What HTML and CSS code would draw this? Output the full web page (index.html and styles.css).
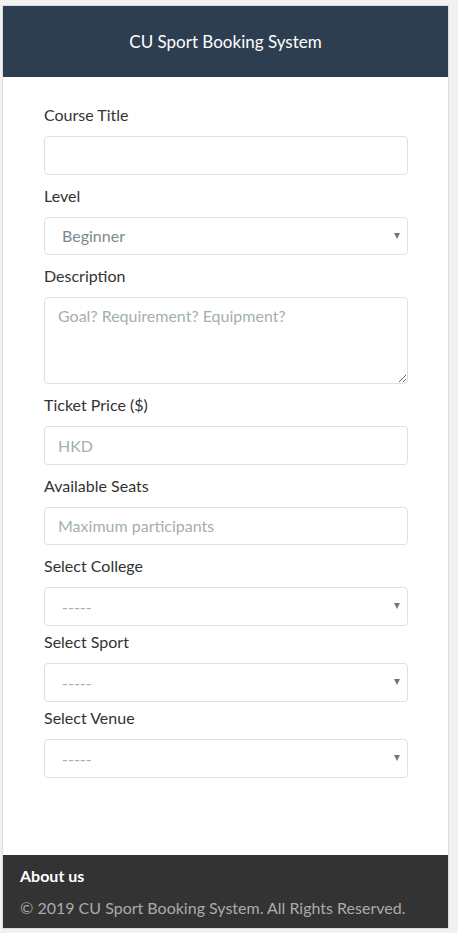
FILE: index.html
```html
<!DOCTYPE html>
<html lang="en">
<head>
<meta charset="utf-8">
<title>CU Sport Booking System</title>
<link rel="stylesheet" href="styles.css">
</head>
<body>
<div class="frame">
  <header class="topbar">
    <h1 class="brand">CU Sport Booking System</h1>
  </header>
  <main class="content">
    <form class="course-form">
      <div class="group">
        <label class="label">Course Title</label>
        <input class="field" type="text">
      </div>
      <div class="group">
        <label class="label">Level</label>
        <div class="select-wrap">
          <select class="field select"><option>Beginner</option></select>
        </div>
      </div>
      <div class="group">
        <label class="label">Description</label>
        <textarea class="field area" placeholder="Goal? Requirement? Equipment?"></textarea>
      </div>
      <div class="group">
        <label class="label">Ticket Price ($)</label>
        <input class="field" type="text" placeholder="HKD">
      </div>
      <div class="group">
        <label class="label">Available Seats</label>
        <input class="field" type="text" placeholder="Maximum participants">
      </div>
      <div class="group tight">
        <label class="label">Select College</label>
        <div class="select-wrap">
          <select class="field select dim"><option>-----</option></select>
        </div>
      </div>
      <div class="group tight">
        <label class="label">Select Sport</label>
        <div class="select-wrap">
          <select class="field select dim"><option>-----</option></select>
        </div>
      </div>
      <div class="group tight">
        <label class="label">Select Venue</label>
        <div class="select-wrap">
          <select class="field select dim"><option>-----</option></select>
        </div>
      </div>
    </form>
  </main>
  <footer class="footer">
    <div class="footer-title">About us</div>
    <div class="footer-copy">© 2019 CU Sport Booking System. All Rights Reserved.</div>
  </footer>
</div>
</body>
</html>
```
FILE: styles.css
```css
html, body {
  margin: 0;
  padding: 0;
}
body {
  background: #f1f1f1;
  font-family: Lato, "Open Sans", sans-serif;
}
.frame {
  margin: 5px 0 0 2px;
  width: 445px;
  border: 1px solid #dcdcdc;
  background: #fff;
  display: flex;
  flex-direction: column;
}
.topbar {
  background: #2c3e50;
  height: 71px;
  display: flex;
  align-items: center;
  justify-content: center;
}
.brand {
  margin: 0;
  color: #fff;
  font-size: 17px;
  font-weight: 400;
  line-height: 1;
}
.content {
  padding: 27px 40px 0 41px;
  height: 751px;
}
.course-form {
  display: flex;
  flex-direction: column;
}
.group {
  display: flex;
  flex-direction: column;
  margin-bottom: 10px;
}
.group.tight {
  margin-bottom: 5.5px;
}
.label {
  font-size: 16px;
  line-height: 22px;
  color: #333;
  margin-bottom: 10px;
}
.field {
  box-sizing: border-box;
  width: 100%;
  height: 38.5px;
  border: 1px solid #dde1e4;
  border-radius: 4px;
  background: #fff;
  font-family: Lato, "Open Sans", sans-serif;
  font-size: 16px;
  color: #7b8a8b;
  padding: 0 13px;
  outline: none;
  margin: 0;
}
.field::placeholder {
  color: #a3afb0;
}
.area {
  height: 87px;
  padding-top: 7px;
  line-height: 22px;
  resize: vertical;
}
.select-wrap {
  position: relative;
}
.select {
  appearance: none;
  -webkit-appearance: none;
  padding-left: 17px;
}
.select.dim {
  color: #a3afb0;
}
.select-wrap::after {
  content: "";
  position: absolute;
  right: 8px;
  top: 16px;
  border-left: 3px solid transparent;
  border-right: 3px solid transparent;
  border-top: 6px solid #6c7a7b;
  pointer-events: none;
}
.footer {
  background: #333;
  padding: 10px 17px 9px;
  height: 73px;
  box-sizing: border-box;
}
.footer-title {
  color: #fff;
  font-weight: 700;
  font-size: 16px;
  line-height: 22px;
  margin-bottom: 10px;
}
.footer-copy {
  color: #ababab;
  font-size: 16px;
  line-height: 22px;
}
```
